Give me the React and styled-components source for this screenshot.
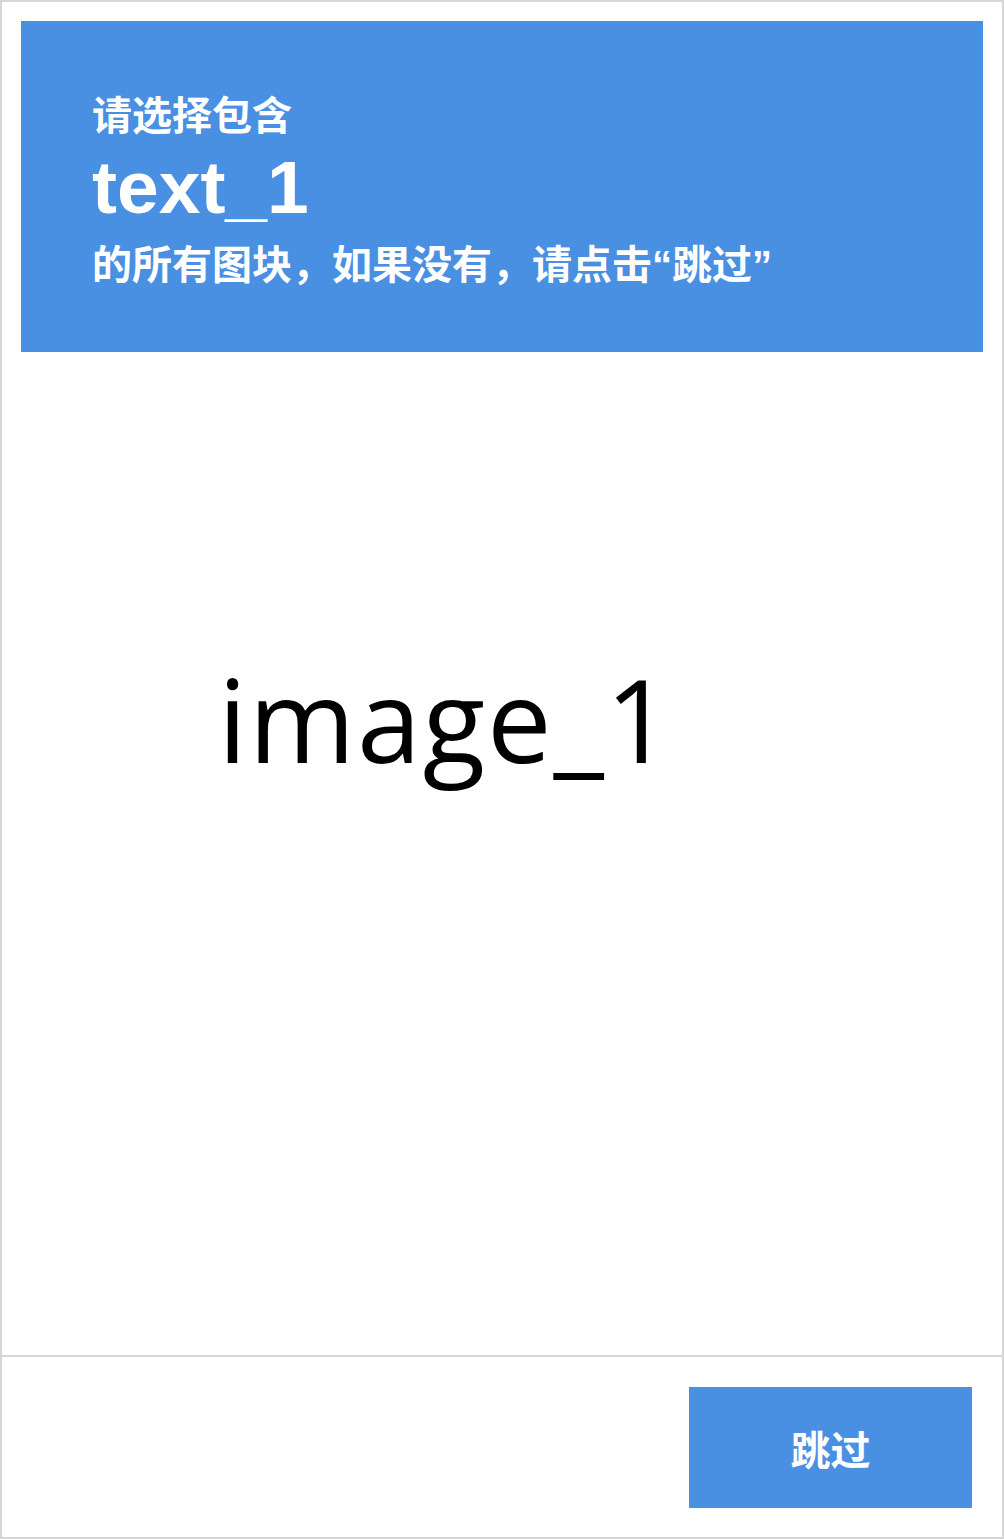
import React from 'react';
import styled, {createGlobalStyle} from 'styled-components';

const GlobalStyle = createGlobalStyle`
  html, body {
    margin: 0;
    padding: 0;
    background: #ffffff;
  }
  * {
    box-sizing: border-box;
  }
`

export default function App() {
    return (
        <>
            <GlobalStyle/>
            <Frame>
                <Body>
                    <Prompt>
                        <Lead>请选择包含</Lead>
                        <Target>text_1</Target>
                        <Hint>的所有图块，如果没有，请点击“跳过”</Hint>
                    </Prompt>
                    <Picture>
                        <PictureText>image_1</PictureText>
                    </Picture>
                </Body>
                <Footer>
                    <SkipButton type="button">跳过</SkipButton>
                </Footer>
            </Frame>
        </>
    )
}

const Frame = styled.div`
  width: 1004px;
  height: 1539px;
  border: 2px solid #d6d6d6;
  display: flex;
  flex-direction: column;
  background: #fff;
`
const Body = styled.div`
  flex: 1;
  display: flex;
  flex-direction: column;
  padding: 19px 19px 0;
`
const Prompt = styled.div`
  height: 331px;
  background: #4a90e2;
  color: #fff;
  padding: 72px 0 0 71px;
  display: flex;
  flex-direction: column;
`
const Lead = styled.div`
  font-family: "Noto Sans CJK SC", sans-serif;
  font-weight: 700;
  font-size: 40px;
  line-height: 40px;
  height: 40px;
`
const Target = styled.div`
  font-family: "Liberation Sans", Arial, sans-serif;
  font-weight: 700;
  font-size: 75px;
  line-height: 75px;
  height: 75px;
  margin-top: 17px;
`
const Hint = styled.div`
  font-family: "Liberation Sans", "Noto Sans CJK SC", sans-serif;
  font-weight: 700;
  font-size: 40px;
  line-height: 40px;
  height: 40px;
  margin-top: 20px;
  white-space: nowrap;
`
const Picture = styled.div`
  flex: 1;
  padding: 309px 0 0 197px;
`
const PictureText = styled.div`
  font-family: "Open Sans", sans-serif;
  font-size: 115px;
  letter-spacing: 1.8px;
  line-height: 1;
  color: #000;
`
const Footer = styled.div`
  height: 182px;
  border-top: 2px solid #d6d6d6;
  padding: 30px 30px 29px;
  display: flex;
  justify-content: flex-end;
`
const SkipButton = styled.button`
  width: 283px;
  height: 121px;
  border: none;
  background: #4a90e2;
  color: #fff;
  font-family: "Noto Sans CJK SC", sans-serif;
  font-weight: 700;
  font-size: 40px;
  padding: 0;
  cursor: pointer;
`
